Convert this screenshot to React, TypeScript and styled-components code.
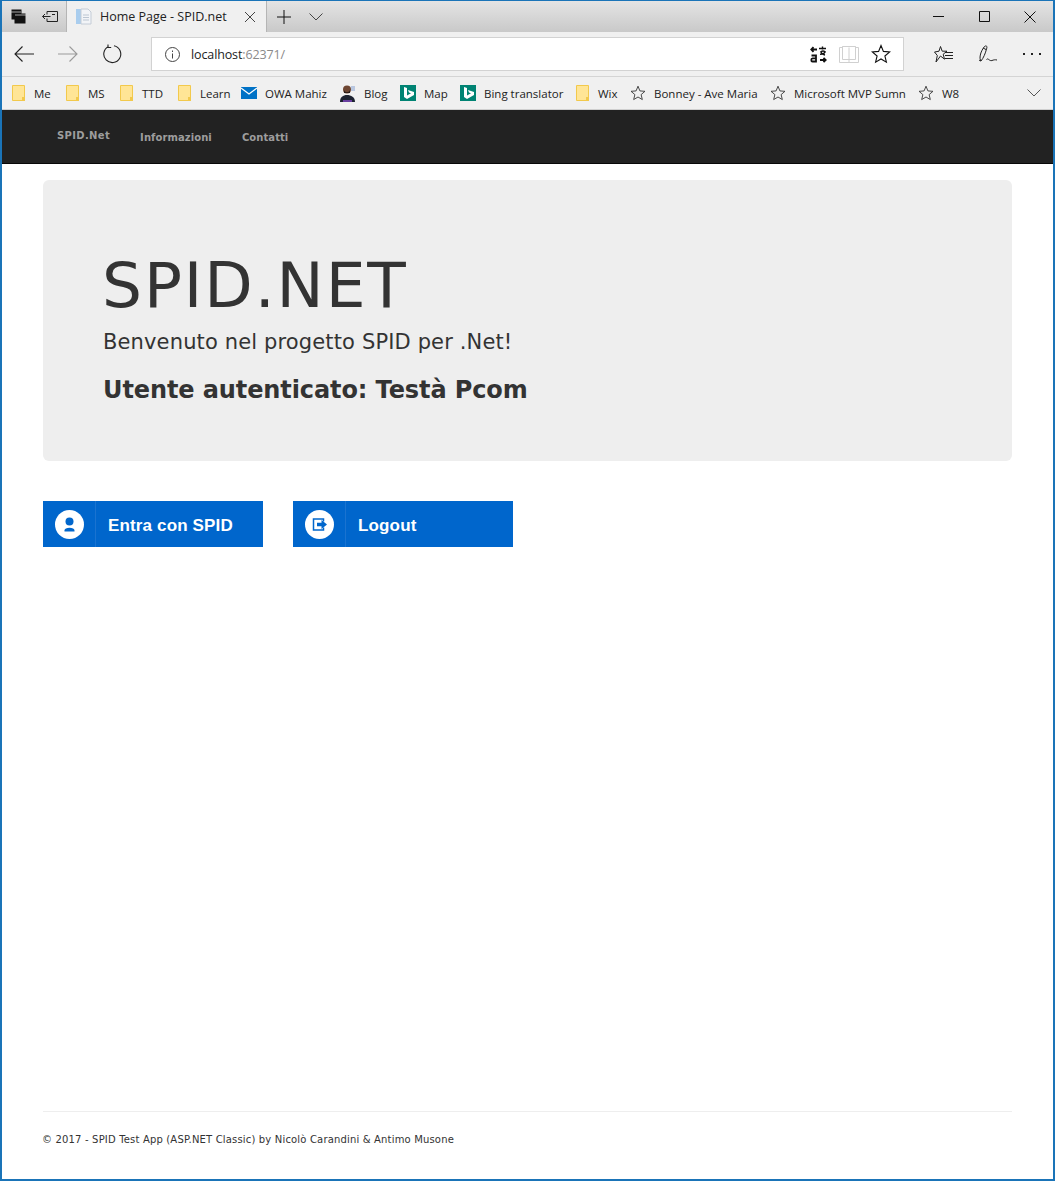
import React from "react";
import styled, { createGlobalStyle } from "styled-components";

const Global = createGlobalStyle`
  html, body { margin: 0; padding: 0; background: #fff; }
  #root { height: 1181px; }
`;
const Frame = styled.div`
  box-sizing: border-box; width: 1055px; height: 1181px; display: flex; flex-direction: column;
  border: 2px solid #1a74b8; border-top-width: 1px; overflow: hidden; background: #fff;
`;
const ChromeFont = `"Open Sans", "Noto Sans", sans-serif`;
const TabStrip = styled.div`
  height: 31px; flex: none; display: flex; align-items: stretch;
  background: linear-gradient(#e4e4e4, #c9c9c9);
`;
const StripBtn = styled.div<{ $w: number }>`
  width: ${p => p.$w}px; flex: none; display: flex; align-items: center; justify-content: center;
`;
const Tab = styled.div`
  width: 201px; flex: none; display: flex; align-items: center; background: #f0f0f0; box-sizing: border-box;
  border-left: 1px solid #b5b5b5; border-right: 1px solid #b5b5b5; padding: 0 10px 0 8px;
  font: 12.5px ${ChromeFont}; color: #222;
`;
const TabTitle = styled.span` margin-left: 8px; flex: 1; white-space: nowrap; `;
const Spacer = styled.div` flex: 1; `;
const Toolbar = styled.div`
  height: 44px; flex: none; display: flex; align-items: center; background: #f0f0f0; border-bottom: 1px solid #d4d4d4;
`;
const ToolBtn = styled.div<{ $w: number }>`
  width: ${p => p.$w}px; flex: none; display: flex; align-items: center; justify-content: center;
`;
const Address = styled.div`
  box-sizing: border-box; width: 753px; height: 34px; margin-left: 17px; margin-right: 18px; flex: none;
  background: #fff; border: 1px solid #d2d2d2; display: flex; align-items: center; padding-left: 13px;
  font: 12.5px ${ChromeFont}; color: #222; letter-spacing: -0.12px;
`;
const AddressText = styled.span` margin-left: 11px; flex: 1; `;
const Port = styled.span` color: #8a8a8a; `;
const AddressIcon = styled.span<{ $gap: number }>`
  display: flex; margin-right: ${p => p.$gap}px;
`;
const Favs = styled.div`
  height: 32px; flex: none; display: flex; align-items: center; background: #f0f0f0; border-bottom: 1px solid #cfcfcf;
  padding-left: 10px; font: 11.5px ${ChromeFont}; color: #222;
`;
const Fav = styled.div<{ $w: number }>`
  width: ${p => p.$w}px; flex: none; display: flex; align-items: center; white-space: nowrap;
`;
const FavIcon = styled.div<{ $w: number }>`
  width: ${p => p.$w}px; flex: none; display: flex; align-items: center;
`;
const Nav = styled.nav`
  height: 54px; flex: none; background: #222; border-bottom: 1px solid #080808; box-sizing: border-box;
  display: flex; align-items: center; padding-left: 55px; padding-top: 2px;
  font: bold 10px "DejaVu Sans", Verdana, sans-serif; color: #9d9d9d;
`;
const Brand = styled.a` margin-right: 30px; position: relative; top: -2px; letter-spacing: 0.35px; `;
const NavLink = styled.a` margin-right: 30px; letter-spacing: 0.08px; `;
const Content = styled.main`
  flex: 1; display: flex; flex-direction: column; padding: 16px 41px 0; min-height: 0;
`;
const Jumbo = styled.section`
  box-sizing: border-box; height: 281px; background: #eee; border-radius: 6px; padding: 68px 60px 0 59px;
  font-family: "DejaVu Sans", Verdana, sans-serif; color: #333;
`;
const Title = styled.h1` margin: 0; font-size: 63px; font-weight: 400; line-height: 76px; letter-spacing: 1.9px; `;
const Lead = styled.p` margin: 3px 0 0 1px; font-size: 21px; line-height: 30px; letter-spacing: 0.14px; `;
const User = styled.h2` margin: 18px 0 0 1px; font-size: 24px; font-weight: 700; line-height: 30px; letter-spacing: -0.1px; `;
const Buttons = styled.div` display: flex; gap: 30px; margin-top: 40px; `;
const SpidBtn = styled.a`
  width: 220px; height: 46px; background: #06c; color: #fff; display: flex; align-items: center;
  font: bold 17px "Liberation Sans", Arial, sans-serif; letter-spacing: 0.15px;
`;
const BtnIcon = styled.span`
  width: 53px; height: 46px; flex: none; box-sizing: border-box; border-right: 1px solid #1a73d0;
  display: flex; align-items: center; justify-content: center;
`;
const BtnText = styled.span` margin-left: 12px; position: relative; top: 2px; `;
const Footer = styled.footer`
  margin-top: auto; height: 68px; box-sizing: border-box; border-top: 1px solid #eee; padding-top: 21px;
  font: 10px/14px "DejaVu Sans", Verdana, sans-serif; color: #333; letter-spacing: 0.17px; text-indent: -1px;
`;

const Folder = () => (
  <svg width="13" height="16" viewBox="0 0 13 16">
    <path d="M.5.5h12v15H.5z" fill="#ffe596" stroke="#f2c94c" />
    <path d="M10 12h3v4h-3z" fill="#f2c94c" />
  </svg>
);
const Star = ({ size = 16, color = "#333" }: { size?: number; color?: string }) => (
  <svg width={size} height={size} viewBox="0 0 20 20">
    <path d="M10 1.500l2.400 5.900 6.300.5-4.800 4.100 1.500 6.200L10 15l-5.400 3.200 1.500-6.200L1.300 7.900l6.300-.5z" fill="none" stroke={color} strokeWidth="1.100" />
  </svg>
);
const Bing = () => (
  <svg width="16" height="16" viewBox="0 0 16 16">
    <rect width="16" height="16" fill="#008373" />
    <path d="M4 2l3 1v7.500l4-2.200-2-.8-1-2.500 6 2.100v3l-7 3.800-3-2z" fill="#fff" />
  </svg>
);
const Mail = () => (
  <svg width="16" height="12" viewBox="0 0 16 12">
    <rect width="16" height="12" fill="#0072c6" />
    <path d="M0 1l8 6 8-6" fill="none" stroke="#fff" strokeWidth="1.200" />
  </svg>
);
const Person = () => (
  <svg width="16" height="18" viewBox="0 0 16 18">
    <rect x="11" y="2" width="4" height="5" fill="#b9c7e0" />
    <circle cx="7" cy="5.500" r="4" fill="#6e4632" />
    <path d="M4 6c1 3 5 3 6 0v3H4z" fill="#2a1c16" />
    <path d="M0 18c0-5 3-7 7-7s8 2 8 7z" fill="#1c2230" />
    <path d="M3 16h9v2H3z" fill="#6a3fa0" />
  </svg>
);

const items: { w: number; iw: number; icon: React.ReactNode; label: string }[] = [
  { w: 54, iw: 22, icon: <Folder />, label: "Me" },
  { w: 54, iw: 22, icon: <Folder />, label: "MS" },
  { w: 58, iw: 22, icon: <Folder />, label: "TTD" },
  { w: 63, iw: 22, icon: <Folder />, label: "Learn" },
  { w: 99, iw: 24, icon: <Mail />, label: "OWA Mahiz" },
  { w: 60, iw: 24, icon: <Person />, label: "Blog" },
  { w: 60, iw: 24, icon: <Bing />, label: "Map" },
  { w: 116, iw: 24, icon: <Bing />, label: "Bing translator" },
  { w: 54, iw: 22, icon: <Folder />, label: "Wix" },
  { w: 140, iw: 24, icon: <Star />, label: "Bonney - Ave Maria" },
  { w: 148, iw: 24, icon: <Star />, label: "Microsoft MVP Sumn" },
  { w: 60, iw: 24, icon: <Star />, label: "W8" },
];

export default function App() {
  return (
    <Frame>
      <Global />
      <TabStrip>
        <StripBtn $w={32}>
          <svg width="15" height="15" viewBox="0 0 15 15">
            <rect x="0.500" y="0.500" width="10" height="10" fill="#111" />
            <rect x="3.500" y="4.500" width="11" height="10" fill="#111" />
            <path d="M0 3h10M4 6h11" stroke="#ccc" strokeWidth="0.800" />
          </svg>
        </StripBtn>
        <StripBtn $w={32}>
          <svg width="16" height="11" viewBox="0 0 16 11" fill="none" stroke="#222">
            <path d="M5 3.500V.5h10.500v10H5V7.500M0.500 5.500h8M3 3L.5 5.500 3 8M10 3.500h3" />
          </svg>
        </StripBtn>
        <Tab>
          <svg width="17" height="17" viewBox="0 0 17 17">
            <path d="M1 1h7v15H1z" fill="#a9cdee" />
            <path d="M6 1h7l3 3v12H6z" fill="#f2f4f7" stroke="#c4ccd6" />
            <path d="M8 7h6M8 9.500h6M8 12h6" stroke="#bcc6d2" />
          </svg>
          <TabTitle>Home Page - SPID.net</TabTitle>
          <svg width="12" height="12" viewBox="0 0 12 12" stroke="#444" fill="none"><path d="M1 1l10 10M11 1L1 11" /></svg>
        </Tab>
        <StripBtn $w={34}>
          <svg width="14" height="14" viewBox="0 0 14 14" stroke="#111" fill="none"><path d="M7 0v14M0 7h14" /></svg>
        </StripBtn>
        <StripBtn $w={30}>
          <svg width="14" height="8" viewBox="0 0 14 8" stroke="#444" fill="none"><path d="M.5.500L7 7l6.500-6.500" /></svg>
        </StripBtn>
        <Spacer />
        <StripBtn $w={46}>
          <svg width="11" height="1" viewBox="0 0 11 1"><path d="M0 0h11v1H0z" fill="#111" /></svg>
        </StripBtn>
        <StripBtn $w={46}>
          <svg width="11" height="11" viewBox="0 0 11 11" fill="none" stroke="#111"><path d="M.5.500h10v10H.5z" /></svg>
        </StripBtn>
        <StripBtn $w={46}>
          <svg width="12" height="12" viewBox="0 0 12 12" fill="none" stroke="#111"><path d="M.5.500l11 11M11.500.500l-11 11" /></svg>
        </StripBtn>
      </TabStrip>
      <Toolbar>
        <ToolBtn $w={44}>
          <svg width="20" height="16" viewBox="0 0 20 16" fill="none" stroke="#222" strokeWidth="1.100"><path d="M20 8H1M8.500.500L1 8l7.500 7.500" /></svg>
        </ToolBtn>
        <ToolBtn $w={44}>
          <svg width="20" height="16" viewBox="0 0 20 16" fill="none" stroke="#9a9a9a" strokeWidth="1.100"><path d="M0 8h19M11.500.500L19 8l-7.500 7.500" /></svg>
        </ToolBtn>
        <ToolBtn $w={44}>
          <svg width="20" height="20" viewBox="0 0 20 20" fill="none" stroke="#222" strokeWidth="1.100"><path d="M6.500 2.500A8.500 8.500 0 1 0 12 1.800M6 .500v3h3.200" /></svg>
        </ToolBtn>
        <Address>
          <svg width="15" height="15" viewBox="0 0 15 15" fill="none" stroke="#444"><circle cx="7.500" cy="7.500" r="7" /><path d="M7.500 6.500v5M7.500 3.500v1.500" /></svg>
          <AddressText>localhost<Port>:62371/</Port></AddressText>
          <AddressIcon $gap={12}>
            <svg width="17" height="17" viewBox="0 0 17 17" fill="none" stroke="#111" strokeWidth="1.800">
              <path d="M7 3.500H1.500M3.500 1.200L1.300 3.500l2.200 2.300" />
              <path d="M9 2.500h7M12.500 .5v3M10 8.200c3 0 5-1 5-3.200M11 5c0 2 2 3.500 4 4M10.500 6.500c1-2 4-2 5 0" strokeWidth="1.400" />
              <path d="M1.500 9.500h4.500v6H2.500c-1.600 0-1.600-3.200 0-3.200H6" />
              <path d="M10 14h5.500M13.500 11.800l2.200 2.200-2.200 2.200" />
            </svg>
          </AddressIcon>
          <AddressIcon $gap={12}>
            <svg width="20" height="17" viewBox="0 0 20 17" fill="none" stroke="#d0d0d0"><path d="M.5 1.500h3v-1h13v1h3v15H.5zM10 1.500v15M3.500.5v13H10M16.500.5v13H10" /></svg>
          </AddressIcon>
          <AddressIcon $gap={12}><Star size={20} color="#111" /></AddressIcon>
        </Address>
        <ToolBtn $w={44}>
          <svg width="20" height="19" viewBox="0 0 20 19" fill="none" stroke="#222"><path d="M6.500 1.500l1.700 4.700h4.800l-3.800 3 1.300 5L6.500 11 2 17l1.300-6.500L.5 7 5 6.200zM11 7.500h8M11 10.500h8M11 13.500h8" /></svg>
        </ToolBtn>
        <ToolBtn $w={44}>
          <svg width="20" height="19" viewBox="0 0 20 19" fill="none" stroke="#222"><path d="M3 16C1 14 2 7 6.500 1.500c2-1.500 3 0 2 2.500C7.500 8 5.500 13 3 16zM3 16c-1 0-1.500-.5-2-1M8.500 14.500c1.500-2 3 2 5.500 1 1.500-.6 3-1 5-.5M5 3l3 1.500" /></svg>
        </ToolBtn>
        <ToolBtn $w={44}>
          <svg width="18" height="2" viewBox="0 0 18 2" fill="#222"><path d="M0 0h2v2H0zM8 0h2v2H8zM16 0h2v2h-2z" /></svg>
        </ToolBtn>
      </Toolbar>
      <Favs>
        {items.map(it => (
          <Fav key={it.label} $w={it.w}>
            <FavIcon $w={it.iw}>{it.icon}</FavIcon>
            <span>{it.label}</span>
          </Fav>
        ))}
        <Spacer />
        <ToolBtn $w={38}>
          <svg width="14" height="8" viewBox="0 0 14 8" stroke="#555" fill="none"><path d="M.5.500L7 7l6.500-6.500" /></svg>
        </ToolBtn>
      </Favs>
      <Nav>
        <Brand>SPID.Net</Brand>
        <NavLink>Informazioni</NavLink>
        <NavLink>Contatti</NavLink>
      </Nav>
      <Content>
        <Jumbo>
          <Title>SPID.NET</Title>
          <Lead>Benvenuto nel progetto SPID per .Net!</Lead>
          <User>Utente autenticato: Testà Pcom</User>
        </Jumbo>
        <Buttons>
          <SpidBtn>
            <BtnIcon>
              <svg width="29" height="29" viewBox="0 0 29 29">
                <circle cx="14.500" cy="14.500" r="14.500" fill="#fff" />
                <circle cx="14.500" cy="11.500" r="4" fill="#06c" />
                <path d="M9.500 21.500v-1c0-1.800 2.200-2.800 5-2.800s5 1 5 2.800v1z" fill="#06c" />
              </svg>
            </BtnIcon>
            <BtnText>Entra con SPID</BtnText>
          </SpidBtn>
          <SpidBtn>
            <BtnIcon>
              <svg width="29" height="29" viewBox="0 0 29 29">
                <circle cx="14.500" cy="14.500" r="14.500" fill="#fff" />
                <path d="M18.500 11.500V9H8.500v11h10v-2.500" fill="none" stroke="#06c" strokeWidth="1.500" />
                <path d="M12 12.800h4.500V10l5.500 4.500-5.500 4.500v-2.800H12z" fill="#06c" />
              </svg>
            </BtnIcon>
            <BtnText>Logout</BtnText>
          </SpidBtn>
        </Buttons>
        <Footer>© 2017 - SPID Test App (ASP.NET Classic) by Nicolò Carandini &amp; Antimo Musone</Footer>
      </Content>
    </Frame>
  );
}
